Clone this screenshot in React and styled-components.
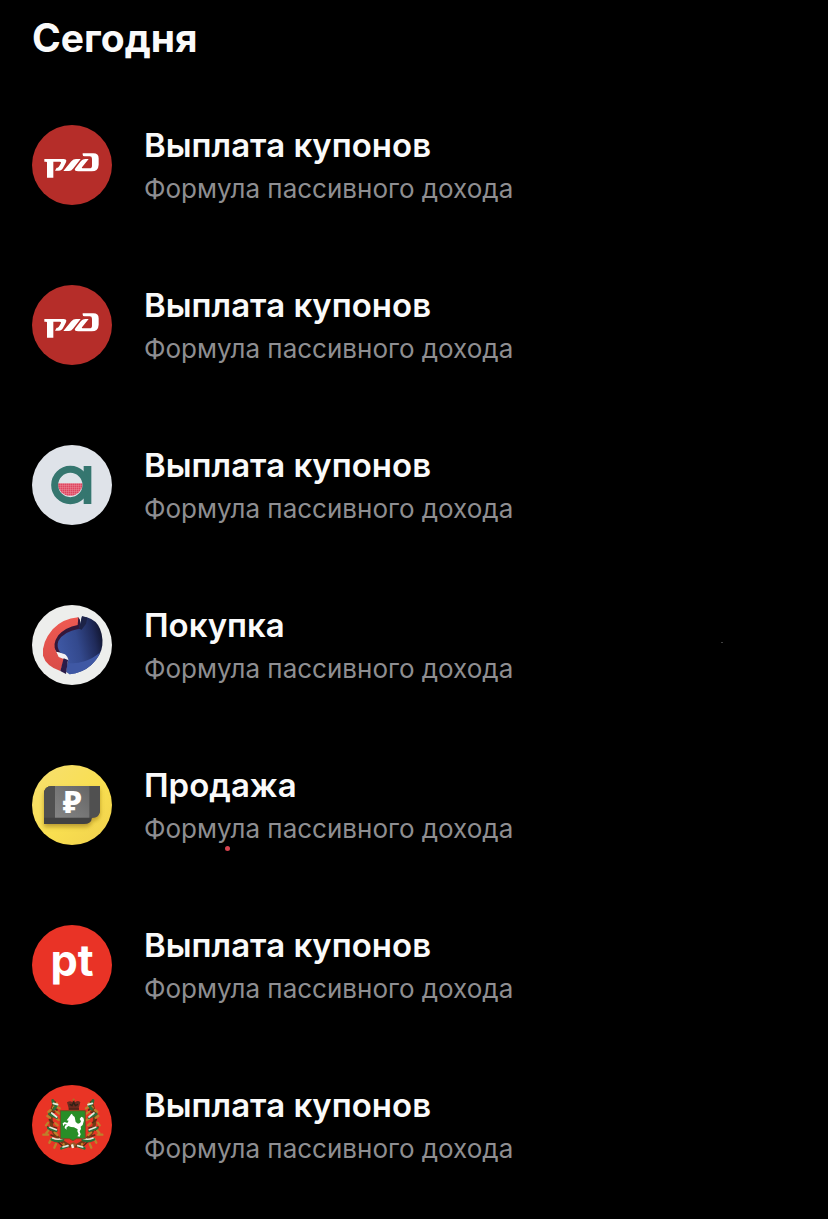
import React from "react";
import styled, { createGlobalStyle } from "styled-components";

const GlobalStyle = createGlobalStyle`
  body {
    margin: 0;
    background: #000;
    font-family: Inter, "Liberation Sans", sans-serif;
  }
`;

const Page = styled.main`
  min-height: 100vh;
  box-sizing: border-box;
  padding: 16px 32px 48px;
  background: #000;
`;

const Heading = styled.h1`
  margin: 0 0 65px;
  font-size: 39px;
  line-height: 44px;
  font-weight: 700;
  color: #fafafa;
`;

const List = styled.ul`
  display: flex;
  flex-direction: column;
  gap: 80px;
  margin: 0;
  padding: 0;
  list-style: none;
`;

const Row = styled.li`
  position: relative;
  display: flex;
  gap: 32px;
`;

const Logo = styled.svg`
  flex: none;
  width: 80px;
  height: 80px;
  border-radius: 50%;
  background: ${props => props.$color};
`;

const Details = styled.div`
  display: flex;
  flex-direction: column;
  gap: 8px;
`;

const Title = styled.h2`
  margin: 0;
  font-size: 33px;
  line-height: 40px;
  font-weight: 600;
  color: #fafafa;
`;

const Subtitle = styled.p`
  margin: 0;
  font-size: 26px;
  line-height: 32px;
  font-weight: 400;
  color: #8e8e91;
`;

const Dot = styled.span`
  position: absolute;
  left: ${props => props.$left};
  top: ${props => props.$top};
  width: ${props => props.$width};
  height: ${props => props.$height};
  border-radius: 50%;
  background: ${props => props.$color};
`;

const Railways = () => (
  <Logo $color="#b52d29" viewBox="24 24 240 240" aria-hidden="true">
    <g fill="#fff">
      <path d="M61 126H118Q130 126 126 136L119 149Q114 161 104 161H93L98 152H101Q104 151 106 147L111 138Q112 134 107 134H88V182H69V136Q69 134 66 134H61Z" />
      <path d="M118 162L142 133Q148 126 156 126H170L147 155Q142 162 135 162Z" />
      <path d="M176 109H208Q224 109 224 124V143Q223 163 203 163H163Q148 163 154 154L171 132Q176 126 184 126H194L174 151Q172 154 176 154H196Q204 154 204 146V125Q204 118 197 118H182Q176 118 176 113Z" />
    </g>
  </Logo>
);

const Absolut = () => (
  <Logo $color="#dfe3e9" viewBox="24 24 240 240" aria-hidden="true">
    <defs>
      <pattern id="mesh" width="6" height="6" patternUnits="userSpaceOnUse">
        <rect width="6" height="6" fill="#df4560" />
        <path d="M0 0H6M0 0V6" stroke="#ef9eab" strokeWidth="2" />
      </pattern>
    </defs>
    <rect x="179" y="87" width="23" height="114" fill="#35766f" />
    <path d="M101 139H176A37 37 0 1 1 101 139Z" fill="url(#mesh)" />
    <circle cx="139" cy="144" r="47" fill="none" stroke="#35766f" strokeWidth="21" />
  </Logo>
);

const Sphere = () => (
  <Logo $color="#edeeec" viewBox="24 24 240 240" aria-hidden="true">
    <defs>
      <linearGradient id="blue" x1="0" y1="0.6" x2="1" y2="0.3">
        <stop offset="0" stopColor="#3f59a6" />
        <stop offset="0.45" stopColor="#33498d" />
        <stop offset="0.8" stopColor="#202b5b" />
        <stop offset="1" stopColor="#11152f" />
      </linearGradient>
      <linearGradient id="coral" x1="0" y1="0" x2="0" y2="1">
        <stop offset="0" stopColor="#ef5a52" />
        <stop offset="1" stopColor="#d94c48" />
      </linearGradient>
    </defs>
    <path d="M163 61L168 68L168 130L130 175L100 170L82 140L100 100Z" fill="#34183a" />
    <path d="M163 61L161 84Q124 91 103 115Q83 143 97 166L122 184L109 222Q66 207 57 176Q52 137 86 97Q115 65 163 61Z" fill="url(#coral)" />
    <path d="M97 164L110 167L129 172L133 194L121 187L104 180Z" fill="#f3f1f3" />
    <path d="M174 58Q205 61 222 84Q238 109 235 145Q232 176 201 205Q175 228 137 232L127 224L133 187Q128 169 110 168Q96 152 103 132Q117 104 165 95Z" fill="url(#blue)" />
    <path d="M127 224L137 232Q175 228 201 205Q220 188 229 166Q207 185 181 193Q151 202 131 197Z" fill="#3f58a4" />
    <path d="M174 58L165 95L173 98L186 80L190 62Z" fill="#1d2347" />
    <path d="M119 184L132 189L126 231L109 222Z" fill="#2b1c48" />
  </Logo>
);

const Money = () => (
  <Logo $color="linear-gradient(135deg, #f6df72, #f9df50 55%, #f0d04d)" viewBox="24 24 240 240" aria-hidden="true">
    <defs>
      <linearGradient id="note" x1="0" y1="1" x2="1" y2="0">
        <stop offset="0" stopColor="#858585" />
        <stop offset="1" stopColor="#666" />
      </linearGradient>
      <filter id="shade" x="-20%" y="-20%" width="140%" height="160%">
        <feDropShadow dx="0" dy="9" stdDeviation="7" floodColor="#8a6b13" floodOpacity="0.55" />
      </filter>
    </defs>
    <path d="M84 87H228V159Q228 182 204 182Q202 201 180 201H60V111Q60 87 84 87Z" fill="#424242" filter="url(#shade)" />
    <path d="M84 87H228V159Q228 182 204 182H60V111Q60 87 84 87Z" fill="#505050" />
    <rect x="93" y="87" width="103" height="95" fill="url(#note)" />
    <text x="145" y="169" textAnchor="middle" fill="#fff" fontFamily="Noto Sans, sans-serif" fontSize="93" fontWeight="800">₽</text>
  </Logo>
);

const Positive = () => (
  <Logo $color="#e93326" viewBox="24 24 240 240" aria-hidden="true">
    <text x="144" y="178" textAnchor="middle" fill="#fff" fontFamily="Inter, sans-serif" fontSize="130" fontWeight="700">pt</text>
  </Logo>
);

const Branch = () => (
  <g strokeLinecap="round" fill="none">
    <path d="M91 76Q78 112 82 142Q88 184 137 207" stroke="#713c16" strokeWidth="10" />
    <path d="M96 88L107 94M97 103L106 110M80 99L73 105M78 122L70 117M72 137L66 145M94 139L101 145M75 158L67 168M92 166L100 174M83 185L76 197M105 190L111 184M96 201L91 212M119 201L115 214M87 92L99 79M72 173L58 173M99 126L105 129" stroke="#bd812b" strokeWidth="7" />
    <path d="M90 93L99 99M79 109L92 105M76 128L87 137M90 151L98 153M71 150L79 159M81 174L90 178M103 195L115 207" stroke="#5c2c14" strokeWidth="5" />
    <path d="M86 70Q86 80 97 86L90 97M76 111L98 122M73 153L97 161M83 187Q102 198 117 188M112 214L130 208" stroke="#28713a" strokeWidth="8" />
    <path d="M88 79L101 83M83 108L98 120M78 151L97 158M86 183Q101 190 117 184M117 210L132 206" stroke="#e5eadd" strokeWidth="5" />
  </g>
);

const Tomsk = () => (
  <Logo $color="#e93425" viewBox="24 24 240 240" aria-hidden="true">
    <Branch />
    <g transform="matrix(-1 0 0 1 293 0)">
      <Branch />
    </g>
    <path d="M134 94L129 76Q139 69 145 76L149 65L153 76Q162 68 169 76L164 94Z" fill="#6b2a1e" />
    <path d="M134 96H165M137 82L144 86L149 76L154 86L162 82" stroke="#302116" strokeWidth="4" fill="none" />
    <path d="M149 64V72M145 68H153" stroke="#b36a27" strokeWidth="3" />
    <path d="M109 101H184V185H157L147 191L136 185H109Z" fill="#288e27" stroke="#7b4a20" strokeWidth="3" />
    <path d="M136 119L141 112L144 110L146 115L152 120L155 135L162 140L168 138L171 133L167 126L172 119L178 122L180 130L176 144L170 149L171 156L167 163L170 172L167 179L160 178L164 172L160 163L161 157L150 151L141 150L133 147L127 152L128 158L122 153L123 146L129 143L122 141L118 148L116 139L122 135L130 138L134 131L128 130Z" fill="#fff" />
    <path d="M138 200L149 195L158 202L150 213Z" fill="#9a5725" />
    <path d="M144 202L147 213" stroke="#f4f0df" strokeWidth="7" />
  </Logo>
);

const operations = [
  { icon: Railways, title: "Выплата купонов" },
  { icon: Railways, title: "Выплата купонов" },
  { icon: Absolut, title: "Выплата купонов" },
  {
    icon: Sphere,
    title: "Покупка",
    dot: { $left: "689px", $top: "37px", $width: "2px", $height: "1px", $color: "#555" }
  },
  {
    icon: Money,
    title: "Продажа",
    dot: { $left: "193px", $top: "81px", $width: "5px", $height: "5px", $color: "#d84450" }
  },
  { icon: Positive, title: "Выплата купонов" },
  { icon: Tomsk, title: "Выплата купонов" }
];

const App = () => (
  <>
    <GlobalStyle />
    <Page>
      <Heading>Сегодня</Heading>
      <List>
        {operations.map(({ icon: Icon, title, dot }, index) => (
          <Row key={index}>
            <Icon />
            <Details>
              <Title>{title}</Title>
              <Subtitle>Формула пассивного дохода</Subtitle>
            </Details>
            {dot && <Dot {...dot} />}
          </Row>
        ))}
      </List>
    </Page>
  </>
);

export default App;
